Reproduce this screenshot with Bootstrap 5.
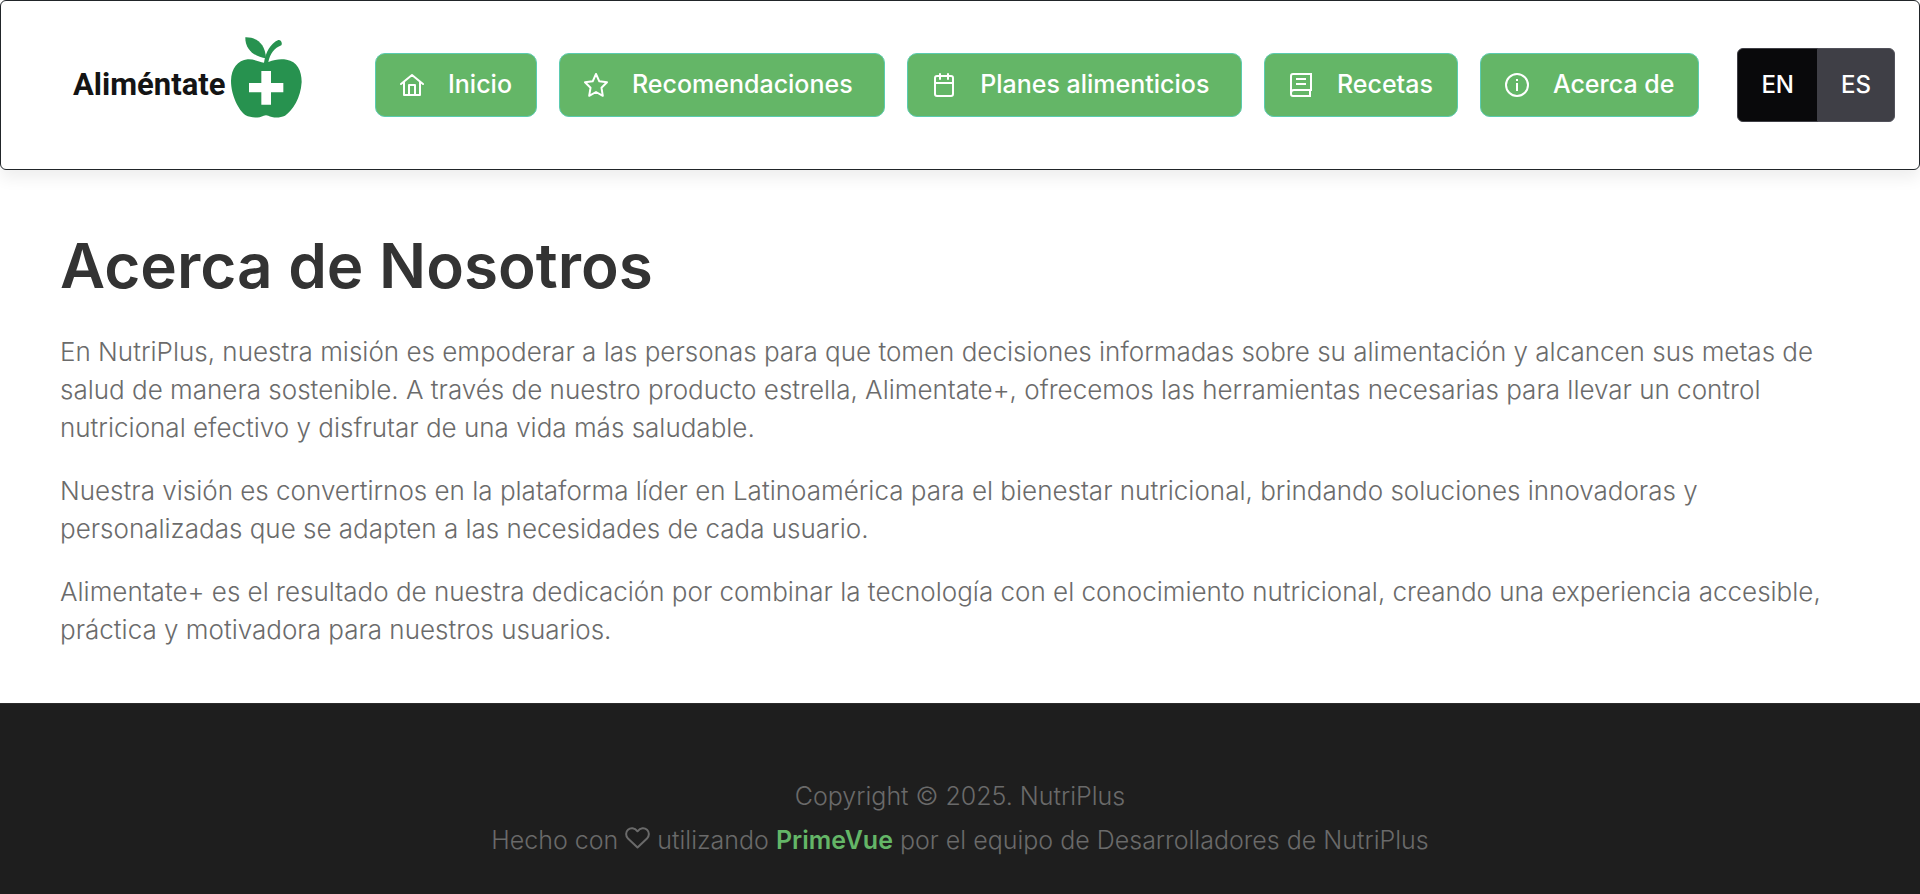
<!DOCTYPE html>
<html lang="es">
<head>
<meta charset="utf-8">
<meta name="viewport" content="width=device-width, initial-scale=1">
<title>Aliméntate - Acerca de Nosotros</title>
<link href="https://cdn.jsdelivr.net/npm/bootstrap@5.3.0/dist/css/bootstrap.min.css" rel="stylesheet">
<style>
  body { font-family: Inter, "Open Sans", sans-serif; color: #6b6b6b; background: #fff; }
  .site-header { min-height: 170px; padding: 0 24px 0 72px; border: 1px solid #212529; border-radius: 6px; box-shadow: 0 8px 16px rgba(0, 0, 0, .07); }
  .brand { width: 302px; color: #141414; }
  .brand-name { font-family: Roboto, "Liberation Sans", sans-serif; font-size: 31px; line-height: 32px; font-weight: 700; }
  .main-nav { gap: 22px; margin-right: 38px; }
  .nav-btn { display: flex; align-items: center; gap: 24px; height: 64px; padding: 0 24px; font-size: 25px; font-weight: 500; color: #fff; background: #64b667; border: 1px solid #5bcbb0; border-radius: 10px; white-space: nowrap; }
  .nav-btn:hover { color: #fff; background: #56a559; }
  .lang-group .btn { height: 74px; padding: 0 23px; font-size: 24px; font-weight: 500; color: #fff; background: #3f3f46; border: 1px solid #52525b; border-radius: 6px; }
  .lang-group .btn.active { background: #09090b; border-color: #3f3f46; color: #fff; }
  .about { padding: 60px 60px 29px; }
  .about h1 { font-size: 62px; line-height: 72px; font-weight: 600; color: #333; margin-bottom: 31px; }
  .about p { font-size: 26px; line-height: 38px; font-weight: 300; margin-bottom: 25px; }
  .site-footer { background: #1e1e1e; border-top: 1px solid #2c2c2c; padding: 70px 24px 30px; color: #6a6a6a; font-size: 25px; line-height: 44px; font-weight: 300; }
  .site-footer a { color: #64b667; font-weight: 600; text-decoration: none; }
  .heart { vertical-align: baseline; }
</style>
</head>
<body class="d-flex flex-column min-vh-100">
<header class="site-header d-flex align-items-center">
  <a href="#" class="brand d-flex align-items-center flex-shrink-0 text-decoration-none">
    <span class="brand-name">Aliméntate</span>
    <svg class="ms-1 mb-3" width="73" height="83" viewBox="688 104 219 249" aria-hidden="true">
      <g fill="#27924f">
        <path d="M734 108C764 107 794 124 796 171C765 167 733 147 734 108Z"/>
        <path d="M790 184C795 154 808 127 833 116C841 115 846 125 842 132C821 140 808 158 803 182C823 174 840 172 858 175C889 180 903 207 903 242C900 291 877 326 853 343C836 351 814 349 803 343Q796 340 789 343C774 351 750 350 735 342C714 327 691 282 691 238C692 201 711 177 741 174C759 173 775 181 790 184Z"/>
      </g>
      <path fill="#fff" d="M782 209H811V245H848V273H811V310H782V273H745V245H782Z"/>
    </svg>
  </a>
  <nav class="main-nav d-flex flex-grow-1" aria-label="Principal">
    <button type="button" class="nav-btn">
      <svg width="24" height="24" viewBox="0 0 24 24" fill="none" stroke="#fff" stroke-width="2" stroke-linejoin="round" stroke-linecap="round" aria-hidden="true"><path d="M1 11L12 2L23 11M4 9V22H20V9M9 22V12H15V22"/></svg>
      <span>Inicio</span>
    </button>
    <button type="button" class="nav-btn flex-grow-1">
      <svg width="24" height="24" viewBox="0 0 24 24" fill="none" stroke="#fff" stroke-width="2" stroke-linejoin="round" aria-hidden="true"><path d="M12 1L15.300 8.300L23 9.200L17.500 14.800L18.800 22.800L12 19L5.200 22.800L6.500 14.800L1 9.200L8.700 8.300Z"/></svg>
      <span>Recomendaciones</span>
    </button>
    <button type="button" class="nav-btn flex-grow-1">
      <svg width="24" height="24" viewBox="0 0 24 24" fill="none" stroke="#fff" stroke-width="2" stroke-linecap="round" aria-hidden="true"><rect x="3" y="3" width="18" height="20" rx="2"/><path d="M3 10H21M8 1V6M16 1V6"/></svg>
      <span>Planes alimenticios</span>
    </button>
    <button type="button" class="nav-btn">
      <svg width="24" height="24" viewBox="0 0 24 24" fill="none" stroke="#fff" stroke-width="2" aria-hidden="true"><path d="M22 18V1H4Q2 1 2 3V21Q2 23 4 23H22M22 17H5Q2 17 2 20M21 17V23M7 6H17M7 11H17"/></svg>
      <span>Recetas</span>
    </button>
    <button type="button" class="nav-btn">
      <svg width="24" height="24" viewBox="0 0 24 24" fill="none" stroke="#fff" stroke-width="2" aria-hidden="true"><circle cx="12" cy="12" r="11"/><path d="M12 10V18M12 6V8"/></svg>
      <span>Acerca de</span>
    </button>
  </nav>
  <div class="lang-group btn-group flex-shrink-0" role="group" aria-label="Idioma">
    <button type="button" class="btn active">EN</button>
    <button type="button" class="btn">ES</button>
  </div>
</header>

<main class="about">
  <h1>Acerca de Nosotros</h1>
  <p>En NutriPlus, nuestra misión es empoderar a las personas para que tomen decisiones informadas sobre su alimentación y alcancen sus metas de salud de manera sostenible. A través de nuestro producto estrella, Alimentate+, ofrecemos las herramientas necesarias para llevar un control nutricional efectivo y disfrutar de una vida más saludable.</p>
  <p>Nuestra visión es convertirnos en la plataforma líder en Latinoamérica para el bienestar nutricional, brindando soluciones innovadoras y personalizadas que se adapten a las necesidades de cada usuario.</p>
  <p>Alimentate+ es el resultado de nuestra dedicación por combinar la tecnología con el conocimiento nutricional, creando una experiencia accesible, práctica y motivadora para nuestros usuarios.</p>
</main>

<footer class="site-footer flex-grow-1 text-center">
  <div>Copyright © 2025. NutriPlus</div>
  <div>Hecho con
    <svg class="heart" width="25" height="22" viewBox="0 0 25 22" fill="none" stroke="currentColor" stroke-width="2" stroke-linejoin="round" role="img" aria-label="amor"><path d="M12.500 20.500L3 11.500C0.500 9 0.500 5 3 2.700C5.500 0.500 9.500 0.500 12.500 4.300C15.500 0.500 19.500 0.500 22 2.700C24.500 5 24.500 9 22 11.500Z"/></svg>
    utilizando <a href="#">PrimeVue</a> por el equipo de Desarrolladores de NutriPlus</div>
</footer>
<script src="https://cdn.jsdelivr.net/npm/bootstrap@5.3.0/dist/js/bootstrap.bundle.min.js"></script>
</body>
</html>
